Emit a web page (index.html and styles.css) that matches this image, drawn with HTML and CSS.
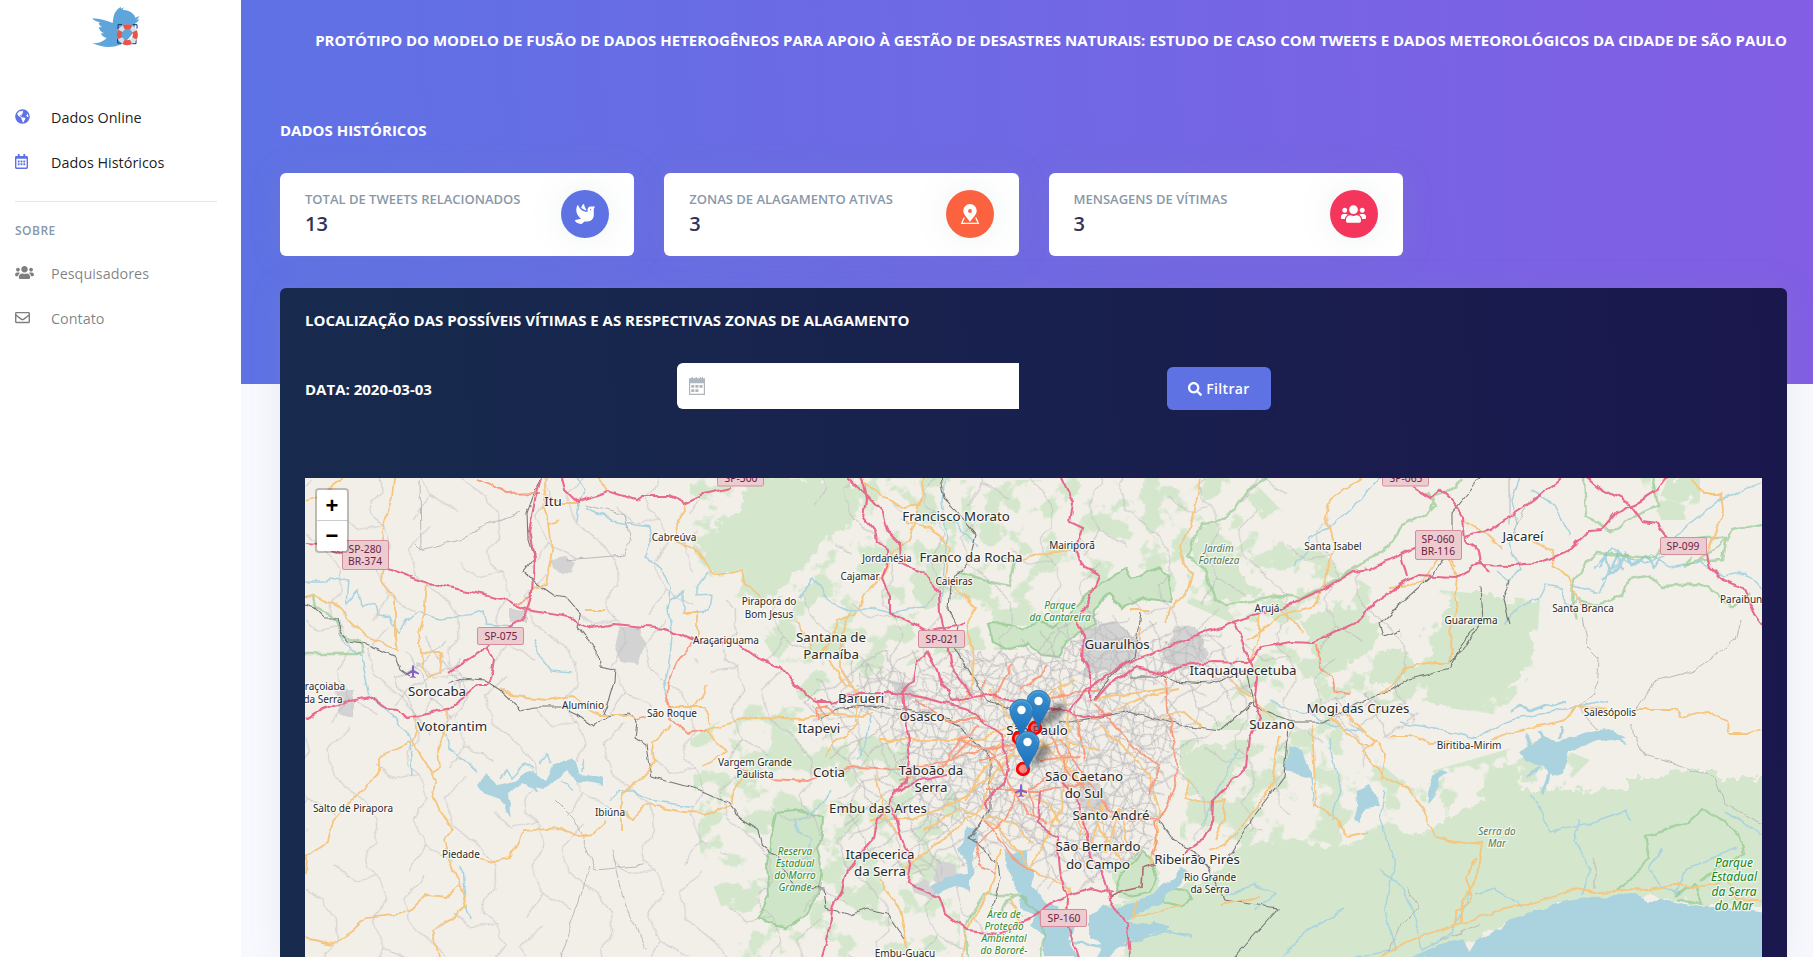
FILE: index.html
```html
<!DOCTYPE html>
<html lang="pt-br">
<head>
<meta charset="utf-8">
<title>Dados Históricos</title>
<link rel="stylesheet" href="styles.css">
</head>
<body>
<aside class="sidebar">
  <svg class="logo" viewBox="276 20 144 123" width="48" height="41">
    <path fill="#5ea5db" d="M278 54q32 2 60 14q2-38 24-48l2 5 8-4-4 7q30 2 38 24l12-5q-2 7-9 11l9-1q-4 8-12 12q-2 41-45 64q-37 16-84-4q28 1 43-16q-14-3-17-14h9q-15-7-15-19l9 1q-10-6-10-14l6-1q-20-3-25-12z"/>
    <path fill="none" stroke="#17345c" stroke-width="3" d="M354 86V73h12M398 73h13v12M353 115v13h13M396 130h12v-12"/>
    <circle cx="382" cy="103" r="24" fill="none" stroke="#d3dfec" stroke-width="14"/>
    <circle cx="382" cy="103" r="24" fill="none" stroke="#e4554c" stroke-width="15" stroke-dasharray="23 14.700" stroke-dashoffset="11.500"/>
  </svg>
  <nav class="nav nav-main">
    <a class="link"><svg class="ico blue" viewBox="0 0 496 512" width="15" height="15"><path d="M248 8C111.030 8 0 119.030 0 256s111.030 248 248 248 248-111.030 248-248S384.970 8 248 8zm82.290 357.600c-3.900 3.880-7.990 7.950-11.310 11.280-2.990 3-5.100 6.700-6.170 10.710-1.510 5.660-2.730 11.380-4.770 16.870l-17.390 46.850c-13.760 3-28 4.690-42.650 4.690v-27.380c1.690-12.620-7.640-36.260-22.630-51.250-6-6-9.370-14.140-9.370-22.630v-32.010c0-11.640-6.270-22.340-16.460-27.970-14.370-7.950-34.810-19.060-48.810-26.110-11.480-5.780-22.100-13.140-31.650-21.750l-.8-.72a114.792 114.792 0 0 1-18.060-20.740c-9.380-13.770-24.660-36.420-34.590-51.140 20.470-45.500 57.360-82.040 103.200-101.890l24.010 12.010C203.480 89.740 216 82.010 216 70.110v-11.300c7.990-1.290 16.120-2.110 24.390-2.420l28.300 28.300c6.250 6.250 6.250 16.380 0 22.630L264 112l-10.340 10.340c-3.120 3.120-3.120 8.190 0 11.310l4.690 4.690c3.120 3.120 3.120 8.190 0 11.310l-8 8a8.008 8.008 0 0 1-5.660 2.340h-8.990c-2.080 0-4.080.81-5.580 2.270l-9.920 9.650a8.008 8.008 0 0 0-1.580 9.310l15.590 31.190c2.660 5.320-1.210 11.580-7.150 11.580h-5.640c-1.930 0-3.790-.7-5.240-1.960l-9.280-8.060a16.017 16.017 0 0 0-15.550-3.100l-31.170 10.390a11.950 11.950 0 0 0-8.170 11.340c0 4.530 2.560 8.660 6.610 10.690l11.080 5.540c9.410 4.710 19.790 7.160 30.310 7.160s22.590 27.290 32 32h66.750c8.490 0 16.620 3.370 22.630 9.370l13.690 13.690a30.503 30.503 0 0 1 8.930 21.570 46.536 46.536 0 0 1-13.720 32.980zM417 274.250c-5.790-1.450-10.840-5-14.150-9.970l-17.980-26.970a23.970 23.970 0 0 1 0-26.620l19.590-29.380c2.320-3.470 5.500-6.290 9.240-8.150l12.980-6.490C440.200 193.590 448 223.870 448 256c0 8.670-.74 17.160-1.820 25.540L417 274.250z"/></svg><span>Dados Online</span></a>
    <a class="link"><svg class="ico blue" viewBox="0 0 448 512" width="13" height="15"><path d="M148 288h-40c-6.600 0-12-5.400-12-12v-40c0-6.600 5.400-12 12-12h40c6.600 0 12 5.400 12 12v40c0 6.600-5.400 12-12 12zm108-12v-40c0-6.600-5.400-12-12-12h-40c-6.600 0-12 5.400-12 12v40c0 6.600 5.400 12 12 12h40c6.600 0 12-5.400 12-12zm96 0v-40c0-6.600-5.400-12-12-12h-40c-6.600 0-12 5.400-12 12v40c0 6.600 5.400 12 12 12h40c6.600 0 12-5.400 12-12zm-96 96v-40c0-6.600-5.400-12-12-12h-40c-6.600 0-12 5.400-12 12v40c0 6.600 5.400 12 12 12h40c6.600 0 12-5.400 12-12zm-96 0v-40c0-6.600-5.400-12-12-12h-40c-6.600 0-12 5.400-12 12v40c0 6.600 5.400 12 12 12h40c6.600 0 12-5.400 12-12zm192 0v-40c0-6.600-5.400-12-12-12h-40c-6.600 0-12 5.400-12 12v40c0 6.600 5.400 12 12 12h40c6.600 0 12-5.400 12-12zm96-260v352c0 26.500-21.500 48-48 48H48c-26.500 0-48-21.500-48-48V112c0-26.500 21.500-48 48-48h48V12c0-6.600 5.400-12 12-12h40c6.600 0 12 5.400 12 12v52h128V12c0-6.600 5.400-12 12-12h40c6.600 0 12 5.400 12 12v52h48c26.500 0 48 21.500 48 48zm-48 346V160H48v298c0 3.300 2.700 6 6 6h340c3.300 0 6-2.700 6-6z"/></svg><span>Dados Históricos</span></a>
  </nav>
  <hr>
  <h6>SOBRE</h6>
  <nav class="nav nav-about">
    <a class="link muted"><svg class="ico" viewBox="0 0 640 512" width="19" height="15"><path id="users" d="M96 224c35.300 0 64-28.700 64-64s-28.700-64-64-64-64 28.700-64 64 28.700 64 64 64zm448 0c35.300 0 64-28.700 64-64s-28.700-64-64-64-64 28.700-64 64 28.700 64 64 64zm32 32h-64c-17.600 0-33.500 7.100-45.100 18.600 40.300 22.100 68.900 62 75.100 109.400h66c17.700 0 32-14.300 32-32v-32c0-35.300-28.700-64-64-64zm-256 0c61.900 0 112-50.100 112-112S381.900 32 320 32 208 82.100 208 144s50.100 112 112 112zm76.800 32h-8.300c-20.800 10-43.900 16-68.500 16s-47.600-6-68.500-16h-8.300C179.600 288 128 339.600 128 403.200V432c0 26.500 21.500 48 48 48h288c26.500 0 48-21.500 48-48v-28.800c0-63.600-51.600-115.200-115.200-115.200zm-223.700-13.400C161.500 263.100 145.600 256 128 256H64c-35.300 0-64 28.700-64 64v32c0 17.700 14.300 32 32 32h65.900c6.300-47.400 34.900-87.300 75.200-109.400z"/></svg><span>Pesquisadores</span></a>
    <a class="link muted"><svg class="ico" viewBox="0 0 512 512" width="15" height="15"><path d="M464 64H48C21.490 64 0 85.490 0 112v288c0 26.510 21.490 48 48 48h416c26.510 0 48-21.490 48-48V112c0-26.510-21.490-48-48-48zm0 48v40.805c-22.422 18.259-58.168 46.651-134.587 106.490-16.841 13.247-50.201 45.072-73.413 44.701-23.208.375-56.579-31.459-73.413-44.701C106.180 199.465 70.425 171.067 48 152.805V112h416zM48 400V214.398c22.914 18.251 55.409 43.862 104.938 82.646 21.857 17.205 60.134 55.186 103.062 54.955 42.717.231 80.509-37.199 103.053-54.947 49.528-38.783 82.032-64.401 104.947-82.653V400H48z"/></svg><span>Contato</span></a>
  </nav>
</aside>
<main>
  <header class="hero">
    <h1>Protótipo do modelo de fusão de dados heterogêneos para apoio à gestão de desastres naturais: estudo de caso com tweets e dados meteorológicos da cidade de São Paulo</h1>
    <h2>Dados históricos</h2>
    <div class="stats">
      <section class="stat">
        <div><p>Total de tweets relacionados</p><b>13</b></div>
        <span class="badge indigo"><svg viewBox="0 0 512 512" width="20" height="20"><path fill="#fff" d="M288 167.200v-28.100c-28.200-36.300-47.100-79.300-54.100-125.200-2.100-13.500-19-18.800-27.800-8.300-21.100 24.900-37.700 54.100-48.900 86.500 34.200 38.300 80 64.600 130.800 75.100zM400 64c-44.200 0-80 35.900-80 80.100v59.400C215.600 197.300 127 133 87 41.800c-5.500-12.500-23.200-13.200-29-.9C41.400 76 32 115.200 32 156.600c0 70.800 34.100 136.900 85.100 185.900 13.200 12.700 26.100 23.200 38.900 32.800l-143.900 36C1.400 414-3.400 426.400 2.600 435.700 20 462.600 63 508.200 155.800 512c8 .3 16-2.600 22.100-7.900l65.200-56.100H320c88.400 0 160-71.500 160-159.900V128l32-64H400zm0 96.100c-8.800 0-16-7.200-16-16s7.200-16 16-16 16 7.200 16 16-7.200 16-16 16z"/></svg></span>
      </section>
      <section class="stat">
        <div><p>Zonas de alagamento ativas</p><b>3</b></div>
        <span class="badge orange"><svg viewBox="0 0 20 20" width="20" height="20"><path fill="#fff" fill-rule="evenodd" d="M10 0a6.700 6.700 0 0 1 6.700 6.700c0 4-4.500 7.300-6.700 11.300C7.800 14 3.300 10.700 3.300 6.700A6.700 6.700 0 0 1 10 0zm0 5.100a1.900 1.900 0 1 0 0 3.800 1.900 1.900 0 0 0 0-3.800z"/><path fill="none" stroke="#fff" stroke-width="1.300" d="M4.300 13.600 1.700 19.300h16.600l-2.600-5.700"/></svg></span>
      </section>
      <section class="stat">
        <div><p>Mensagens de vítimas</p><b>3</b></div>
        <span class="badge red"><svg viewBox="0 0 640 512" width="25" height="20"><use href="#users" fill="#fff"/></svg></span>
      </section>
    </div>
  </header>
  <section class="panel">
    <h3>Localização das possíveis vítimas e as respectivas zonas de alagamento</h3>
    <form class="filter">
      <h4>Data: 2020-03-03</h4>
      <div class="field"><svg viewBox="0 0 16 18" width="16" height="18"><path fill="#adb5bd" fill-rule="evenodd" d="M0 1.300h2.500V0h1.300v1.300h2.800V0h1.300v1.300h2.700V0h1.300v1.300H13V0h1v1.300h2V18H0zm1.200 4.900v10.600h13.600V6.200z"/><path fill="#adb5bd" d="M2.300 8h3v2.800h-3zM6.400 8h3v2.800h-3zM10.500 8h3v2.800h-3zM2.300 12.200h3V15h-3zM6.400 12.200h3V15h-3z"/></svg></div>
      <div class="action"><button type="button"><svg viewBox="0 0 512 512" width="14" height="14"><path fill="#fff" d="M505 442.700L405.300 343c-4.500-4.500-10.600-7-17-7H372c27.600-35.300 44-79.700 44-128C416 93.100 322.900 0 208 0S0 93.100 0 208s93.100 208 208 208c48.300 0 92.700-16.400 128-44v16.300c0 6.400 2.500 12.500 7 17l99.700 99.700c9.400 9.400 24.600 9.400 33.900 0l28.300-28.300c9.400-9.400 9.400-24.600.1-34zM208 336c-70.700 0-128-57.200-128-128 0-70.700 57.200-128 128-128 70.700 0 128 57.200 128 128 0 70.700-57.200 128-128 128z"/></svg>Filtrar</button></div>
    </form>
    <div class="map">
      <svg class="canvas" viewBox="305 478 1457 479" width="1457" height="479">
        <defs>
          <filter id="wiggle" filterUnits="userSpaceOnUse" x="285" y="458" width="1500" height="520" color-interpolation-filters="sRGB">
            <feTurbulence type="fractalNoise" baseFrequency=".07" numOctaves="2" seed="4"/>
            <feDisplacementMap in="SourceGraphic" scale="7" xChannelSelector="R" yChannelSelector="G"/>
          </filter>
          <filter id="ragged" filterUnits="userSpaceOnUse" x="285" y="458" width="1500" height="520" color-interpolation-filters="sRGB">
            <feTurbulence type="fractalNoise" baseFrequency=".1" numOctaves="4" seed="7"/>
            <feDisplacementMap in="SourceGraphic" scale="16" xChannelSelector="R" yChannelSelector="G"/>
          </filter>
          <filter id="speckle" filterUnits="userSpaceOnUse" x="305" y="478" width="1457" height="479" color-interpolation-filters="sRGB">
            <feTurbulence type="fractalNoise" baseFrequency=".035" numOctaves="5" seed="11"/>
            <feColorMatrix values="0 0 0 0 .83  0 0 0 0 .906  0 0 0 0 .8  14 0 0 0 -7.100"/>
            <feComposite in2="SourceGraphic" operator="in"/>
          </filter>
          <filter id="soft" x="-50%" y="-50%" width="200%" height="200%"><feGaussianBlur stdDeviation="2.500"/></filter>
          <pattern id="streets" width="47" height="43" patternUnits="userSpaceOnUse" patternTransform="rotate(14)">
            <path class="street" d="M0 5L12 8 24 3 47 5M0 17L9 15 20 20 33 14 47 17M0 30L15 27 27 33 40 28 47 30M0 38h14l8 3 12-5 13 2M6 0L9 15 5 28 6 43M17 0L15 12 20 20 16 33 17 43M29 0l-2 12 6 8-4 13v10M40 0l2 16-3 12 1 15M9 15l6 12M20 20l7 13M24 3l9 11"/>
          </pattern>
          <pattern id="streets2" width="71" height="61" patternUnits="userSpaceOnUse" patternTransform="rotate(-33)">
            <path class="street" d="M0 9L20 14 38 6 71 9M0 31L14 27 39 37 52 28 71 31M0 52L25 49 44 55 71 52M11 0L14 27 8 44 11 61M30 0l3 15-4 17 5 18-4 11M57 0l-5 28 6 12-1 21"/>
          </pattern>
          <pattern id="lanes" width="127" height="109" patternUnits="userSpaceOnUse" patternTransform="rotate(22)">
            <path class="street" d="M0 22L22 30 44 16 60 34M88 0L76 28 92 50 127 61M0 61L20 72 30 94 23 109M23 0L30 12 44 16M60 34L55 60 76 80 108 84M76 80L70 109"/>
          </pattern>
          <linearGradient id="pinfill" x1="0" y1="0" x2="0" y2="1"><stop offset="0" stop-color="#3b93cf"/><stop offset="1" stop-color="#1a6cbb"/></linearGradient>
          <g id="pin">
            <path fill="url(#pinfill)" stroke="#2a73ad" stroke-width=".8" d="M0 0C-2-10-11.700-18-11.700-28.500A11.800 11.800 0 0 1 11.700-28.500C11.700-18 2-10 0 0z"/>
            <path fill="none" stroke="#5fa8dc" stroke-width=".8" d="M-10.500-28A10.600 10.600 0 0 1 10.500-28"/>
            <circle cy="-28" r="4.200" fill="#fff"/>
          </g>
          <path id="plane" fill="#8461c4" d="M0-6q1 0 1 2v3l5 3v1.500L1 2v3l1.700 1.200v.8L0 6.500-2.700 7v-.8L-1 5V2l-5 1.500V2l5-3v-3q0-2 1-2z"/>
        </defs>
        <rect x="305" y="478" width="1457" height="479" fill="#f2efe9"/>
        <g filter="url(#speckle)">
          <path d="M690 478H950L960 560 1010 620 960 650 860 680 800 700 740 600 690 560z"/>
          <path d="M750 700L880 720 960 800 960 957H740L700 850 690 740z"/>
          <path d="M1060 478H1250L1330 560 1390 600 1420 690 1330 730 1210 730 1270 640 1180 600 1110 600 1040 560z"/>
          <path d="M1180 740L1270 740 1330 720 1400 780 1540 740 1590 760 1540 810 1440 850H1180z"/>
          <path d="M1440 590L1540 600 1535 670 1500 715 1390 700zM1640 478H1700V520H1660z"/>
          <path d="M960 480H1060V650H970z"/>
        </g>
        <g class="wood" filter="url(#ragged)">
          <path d="M747 478H850L854 513 842 530 825 538 810 560 795 575 780 588 762 598 743 570 720 574 708 560 690 542 718 535 715 520 742 512z"/>
          <path d="M915 578l20 6 6 12-8 14-18-10z"/>
          <path d="M1204 523L1215 525 1235 550 1240 575 1262 590 1235 603 1220 600 1210 570 1188 557z"/>
          <path d="M1225 870L1240 842 1300 840 1340 848 1380 832 1425 834 1445 820 1485 800 1480 790 1490 770 1515 760 1520 790 1555 790 1627 789V778H1670L1672 770H1712L1716 778H1782V905L1700 905 1640 895 1560 905 1490 930 1420 977H1130L1110 905 1150 900z"/>
          <path d="M1140 850l18 20 2 20-20 16-18-8-12-26zM1300 620l40-15 40 20-10 30-50 12zM1380 652l20-5 18 20-20 20-30-6zM1180 753l35-10 30 12-24 48-34-8z"/>
          <path d="M1450 600l40-8 40 22 4 40-20 30-40 24-50-6 6-40z"/>
          <path d="M1665 478h30l-6 20-16 8-12-12z"/>
        </g>
        <g filter="url(#wiggle)">
          <g class="park">
            <path d="M776 812l19-2 28 8-1 18-5 11 5 22-3 20-12 27-20 13-30-9 12-24-2-33z"/>
            <path d="M988 624l25 1 8 5 19-8 14 5 10-7 30-33 8-4 24-14 6 9 29-10 6 7 5 27-28-4-22 10-14-14-16 15 4 16-16 7-13 8-8 17-16-2-14-12-20 7-16-8z"/>
            <path d="M1122 872l14-12 6-10 10 10 4 16-6 16-20 4-14-4zM1158 892l14-4 16 4 4 8-12 6-16-4z"/>
          </g>
          <g class="field-grey"><path d="M620 627h20l5 17-8 20-15-3-7-14zM510 610h16v12h-16zM550 560l16-3 10 5-4 10-20-2zM335 690h18v26h-14zM1084 630l30-8 26 18-10 26-46 10zM1175 625l20 2 14 26-20 18-28-10zM1080 780l20 4 12 25-14 10-20-20zM936 860l18 4 4 18-14 8-12-10zM910 885l14-4 14 10-6 8-16-6zM890 680l20 4 5 14-16 5z"/></g>
          <path fill="url(#lanes)" d="M305 478H700L690 640 730 740 700 820 740 957H305z" opacity=".8"/>
          <path fill="url(#lanes)" d="M800 478H1300L1420 640 1400 740 1270 830 1130 850 960 957H740L700 740 720 600 860 590z" opacity=".9"/>
          <path fill="url(#streets)" d="M862 662L935 680 960 650 1010 655 1060 650 1085 625 1130 640 1210 640 1190 670 1120 700 1180 720 1160 790 1150 850 1100 880 1040 850 980 820 930 830 900 760 890 720 850 710z"/>
          <path fill="url(#streets2)" d="M800 690L870 650 1000 650 1080 610 1220 630 1260 690 1180 760 1150 850 1060 900 1000 850 930 880 850 850 830 760z"/>
          <path fill="url(#streets2)" d="M395 660l30-25 30 10 15 40-20 35-25 20-30-30zM1320 700l60-10 40 25-20 25-60-10z" opacity=".9"/>
          <g class="water">
            <path d="M476 785l10-12 11 12 17-4 15-10 17 8 8-15 17-5 8 15 24 3v8l-26-4-10-11-12 10-12 10-22-6-13 10 3 25-11-20-17-6z"/>
            <path d="M967 826l8 4 1 14-4 18 3 12-6 8 0 10-12-6-18 8-8-8 16-10 20-2-1-12-8-14 8-8z"/>
            <path d="M1003 850l10 4 12-2 4 12 6 10-4 12 14 16 14 6-8 14 18-2 6 8-8 12 10 16h-32l-2-20-14-10 6-10-16-10 2-12-10-14-2-12z"/>
            <path d="M1090 914l16-8 16 2 14-8 16-4 10-10 12-6 6-12 8 2-6 14-14 10-6 8-14 6-12 8-10 4 12 6 16-4 16 4-4 6-16 2-8 8-14-2-10 8-8 8-14 2 6-14-12-8z"/>
            <path d="M1290 746l13 4 6 18 4 12-13-4-6-4-10-2zM1357 790l12-6 6 10 4 12-12 2-6 14-6-2z"/>
            <path d="M1519 752l14-8 12-8 10 6 20-6 22-5 16-1 14 8-30 2-28 12-6 20-12 5-8-12-16-3zM1432 775l8-5 8 2-8 6-4 16-8 10 2-14z"/>
            <path d="M1412 957l25-12 26-7 6 13 8-13 23-8 7-9 20-8 40-12 26-4 44-2 10 6h23l30 6h35l48 8v55z"/>
          </g>
          <g class="river">
            <path d="M305 582l20 0 7-5 17 4-2 23 12-13 2 16 15-5 2 12 11 2 9 18 9-16 14-5 19 6 26-3 17-5 3 13 27 2M533 640l7 17 10 13 22 2M340 620l2 20 20 17 3 17 5 23 24 20 16 23 2 37M447 733l3 17 13 10 14 12M462 867l3 33 5 20M577 478l8 12-8 13-2 17M585 507l32 15 33 5 2 13-7 17 17 11 8 19-2 23 4 27-4 33-5 17 4 13M670 600l13-7v20l27-2 2-16-15 1v-9l10-14M610 800l10-10h13l17 10 43 7M500 778l6-10 6 10 14-14 6 6M540 765l6-12 4 10M506 795l4 12M530 780l8 12M560 780l14 10M582 772l2-12"/>
            <path d="M800 598l13-20 17 25 20 8 20-4 20 6 20-4 16-1M945 478l-3 22 5 40-4 40-3 30M830 790l-12 20-20 10M870 715l-5 30-8 15M950 520l20 16 8 12M1240 748l-20 36-8 22-10 20M795 818l4 14 12 8-4 16-12 8"/>
            <path d="M1380 478l-15 18-20 18-12 12-24 12-4 16-10 12M1270 700l20 10 25 5 20 12 30 5M1310 770l4 36M1330 740l10 50-8 30"/>
            <path d="M1520 478l-8 22 5 24-8 20 10 25-10 12-12-10M1530 490l25 15 15 30M1670 540l50-40 42-18M1570 585l30 8 8-20 15-15 12 8 15-12 20 14 30-6 24 14 22-4 20 20"/>
            <path d="M1505 625l13-20 20-5 8-16 15 3 6 18 12-8M1400 722l40 8 35 8 36-18 30-6 40-8 15-4 12 2M1385 790l-5 30 15 40-10 50 10 40-40 7M1380 870l20 15 12 20 10 45 30-18 18-40M1530 795l14 20 6 16 40-8 34-12 8 10M1580 820l-6 20 16 30-8 26M1737 848l-50 20-12 25M1662 850l-12 18 10 18 20 8M1725 812l37 22M1345 910l-38 20-25 27M1225 895l30-10 20 10-20 16M1475 895l20-6 20 12 6 6M1595 568l15-18 20 8 14 6 20-8"/>
          </g>
          <g class="bay"><path d="M1600 568l6-12 4 16 8-18 4 14M1600 580l14-8 12-18 6 12 14-10 6 12 8-8M1530 746l-4-12M1545 740l-4-10M1560 738l2-10M1550 770l-8 24M1540 765l-14 12M1600 735l20 4 6 6M1510 712l10-6 10 4 14-6 10 2 12-4M1060 940l30 4 24 4 30-10 26-6 20 6M1170 884l12-8"/></g>
          <g class="border">
            <path d="M305 596h8l2 10 20 12 6 18 20 6 2 12-58 0M1268 478l-20 12-13 20-18 12-15 2-15 32 18 12 10 32 12 6 50-10 25 2 20-10 40-24 25-18 15-20 25-12 8-8-8-14M1430 510l4-15 20-6 8-11M1584 478l2 38 26 16 18-13 28-14-6-27M1577 620l-5-10 1-30 22-26 60 4 12-16 40-5 20 0-4 22-30 2M1577 600l20 5 26-10 5-16 20-3 15 10 36-2 20 12 14 12 16-14M1762 524l-30 6-16 20-30 16 4-10"/>
            <path d="M1618 890l32-32-4-22 10-4 32-10 14-12 26 14 12 12 4 18-18 8-24 18M1675 895l20-12 6 22-24-6"/>
            <path d="M957 572l26 8 26 6 6-24-20-8M968 957l-4-30 20-32 36 0 18 16 6 26-6 30M1002 915l4-14 14-7"/>
          </g>
          <g class="rail">
            <path d="M305 605l10 3 10 10h12l3 12 8 11 15 2 17 7 15 7 5 13 10 7M447 683l16-6 20 2 17 11 21 20 12-3h27l17 8 16 11 14-9 22-4 8 10-2 14 12 8 5 32 22 6 26 7 27 12 13 16 19 12 3 15 15 12 17 30 30 1 2 20 25 7 16-6 20 4 18 26"/>
            <path d="M540 478l-13 35 1 27 6 18-10 13 13 13 17 12 13 2 13 15-2 13 20 25 1 15 16 3-1 13-5 17-7 17M940 478l4 20 12 12 20 25-6 24-20 25-2 26 10 16-4 20 10 16 24 40 30 8 20 0M820 720l20-12 30-2 50 6 30 6 40 40 0 50-20 30 28 25 2 15-8 30"/>
            <path d="M1094 700l18-25 22-18 6-44M1130 676l30 0 12 6 38 2 36-14 8 36 40 16 30 0 40-22 25-8 21-14 40-10 10-20 14-20M1060 725l70-14 40 12 20 4 30 4 35-30M1288 726l-4 50-30 40-25 40M1160 820l14 20 30 20 20 40 54 8-44 49"/>
            <path d="M1480 478l-28 34 0 30-18 32-34 30-20 20 4 12 16-6M1480 586l2 34-18 30-16 12M1510 580l-6 20 6 24"/>
          </g>
          <g class="lane"><path d="M415 545l5 5 40-10 20-12 40-16M420 480l1 70M565 560l60-5 5-15-5-25-40-10M1583 617l5 30 10 10-2 36-15 12 3 10 14 15M1740 620l-5 20-40 30-40 12-22 32M1630 725l14 30 30 8 40 15 10 25 38 20M1405 885l14 22-20 20-12 26M555 800l20 20 20 50 50-5M612 850l15 60 20 40M560 957l30-90M1595 858v30M1440 940l40-16M1510 478v46M1530 500l-16 30"/></g>
          <g class="yellow">
            <path d="M305 501l15-6 23-17M394 478l-2 20-10 32 3 27-3 26 13 15v39l2 13M427 583l-3 34-5 16 4 37 6 7 11-4 2-20-22-1M305 595l12 2 23 11 10 12 17 17 30 12M547 478l-4 29 6 16 3 27-6 35-13 3M543 495l20 8h14M549 525l10-5M500 688l13 9 34 3 26-4 17 14 10 5h27l10 5M415 718l2 12-5 12-32 15v16l-20 19-27 28-5 22-22 15-1 18"/>
            <path d="M412 742l19 30 5 12-3 15 19 30-8 10 5 21 11 24 7 22-20 15-14 11 6 25M447 710l-2 23-8 17 2 17-8 5M305 938l27 6 21-14 14-13 43-5 17-17 20 2 12-12M477 858l10 5 23-5 13-27 37-3 17 8 16-2 14-13M622 830v-37l25-20 7-13-2-17 20-18M622 810l10 8 15-13 36 7 30 1 17-8 3-15 10-13M705 730l38-10 20-3 40 2 30-6 30 4 10-5M705 730l22 23-24 12M685 502l1 8-11 13 2 19 16 5 10 13 7 13 13 2 19-5 3 15 18 13M683 613h14v24M597 478l11 13M695 707l12-20M667 707h38l5 18M585 610h20M860 478l16 15 30 14 14-2 4-27M920 500l-10 40-18 12-6 20-20 20-12 24-18 6-5 20-10 14M830 660l15 25 15 8M900 520l30 8 20 20-4 30 30 28-10 20 8 30-2 30-10 16M795 620l15 22 2 8M850 613l-10 30 0 25 18 30-4 30-20 15-10 14M1200 478l-6 30-6 26-8 10 4 20 8 12-6 18-16 16-4 14M1362 478l-20 12-12 10-4 16 8 30-10 40-10 20-36 10-12 12-20 12M1020 560l20-6 30-4"/>
            <path d="M870 820l40 0 50-20 50-40 10-30-30-40M965 800l50-80 40-30 20-10M900 870l30-20 50-40 20-50 60-20 40 10M880 740l100 0 60-30M925 830l35-22 40 20 30 40 40 20-4 24-26 6M1000 850l-10 40-24 40-4 27M1090 720l60-25 30-6M1090 700l80-12M1060 680l10 50-10 80-30 60M1100 725l20 20 30 30 10 40-8 50M1040 740l40 40 20 50 20 30M1080 840l0-30 10 40 12-46 4 50 14-46 8 40M1130 610h20M1140 640l0-14M1160 720l10-6 14-2 18 16M1190 780l-5 18 20 6 20-4 0 20-10 20M1280 735l-10 55-40 50-20 10M1312 725l4 80 20 14 12 18 20-4M1260 610l-2 34-12 20M1280 610l24 22M1230 680l24 20 20 20M1330 718l30 25 10 4M1345 712l30 30-12 10 20 24 26 12 12 18 10 20 4 12 30 6 16-2-6 40-14 20v20M1180 905l-48 14 4-20M1220 905l40-8M880 880l20 30 10 47M875 775l10 40 14 20M985 815l30 10 20 20M1010 790l40 14 10 20"/>
            <path d="M1380 695l15-12 10-16 30-5 14 0 4-12-4-20 8-20-2-14 2-20-10-20M1390 587l20-2 12-3 14-20 10-30M1465 521l16 10 20 18M1533 540l20 10 1 14 14 13 8 20 4 8M1440 538l16 30M1390 735l20 0 20 8 20-2M1490 740l40-12 36-8 10-14 18 2 12 2M1636 709l40 0 6 8 24-6 20 10 4 12 20 0 12-4M1692 478l10 16 20 0 2 14-8 24-8 20-8 6M1380 957l34-18 44-15 36-12 40-10 30-8 12-6 20 4 46-2 30-5 34 2 22-8 10 20 30 2 42-4M1456 924v-12l16-14-5-20 8-20M1020 920l-10-20M1375 740l10 15-4 24"/>
          </g>
          <g class="orange">
            <path d="M477 478l16 6 14 10 33-1M533 595l-18 10M692 643l-15 20-9 20-1 20 3 13 18 17 17-3M637 720l10-3M740 767l10 7 20 5 38 2 22-9 30-5 30 2 40-4 20-6 40-10 36-8M818 720l-2-12 12-2 8 8M815 698l10 20M980 700l4-22M995 700l8-20 10-16M1020 690l20-14 8-10M915 700l30 20 40 0M900 780l40-10 20-30 20-14M960 740l32 14 36 60 20 10M1040 700l60-10M1075 710l10 50M1165 680l2 30 8 34 2 36-12 32-10 10 2 20-4 10 10 12M1095 705l40 44 25 16-10 30M1018 790l-12 30-30 24 4 20 14 10M985 820l30 40 20 12M1040 760l40-4M1060 770l-30 18 4 30M1060 740l20 30 30 40 20 10 30-2M1316 645l4 26 12 6 4 16 14 2M980 760l30-10 30-20M985 790l60 0 40-6M950 760l20-20M1050 730l16 40 20 20"/>
          </g>
          <g class="pink">
            <path d="M305 544l15 1 38 15 30 8 20 8 20 7 40 8 33 8 27 11 40 7 23 11 24-4 50 5 28 12 38 2 14 6 13 9 23 9 14 17 20 18 17 0 30-10 33 0 26 5 27 7 20 5 10 10 23 17 7 20-3 26-20 20 2 7"/>
            <path d="M541 478l-6 22-6 32 5 25-2 36-5 17-7 10-20 13-12 14-40 26M488 647l6 11-2 14-5 13h-9l-15 13-16 12-40 8-8-8-12-1-17-12-20 4-17 4-13 5-15 9M562 478l3 12 12 12 31-11 22 7 7 2 6-4h27l14 7 20-9 27-6"/>
            <path d="M848 478l20 19 14 15 5 18 12 12 1 20 26 13 13 18 1 20 6 24 5 30 22 30 16-2 27 7 50 8 17 8 28-4M863 478l4 22-3 17 11 13 2 12 10 8v15l-5 13 8 19v15l23 12 12 7 38-7M927 652l-10 11-3 17-12 12 2 21 3 24 3 20-3 23-14 13-1 10-15 17-5 20-12 13-13 17-5 20-10 20-3 23-7 24M927 652l10 18 3 13 10 9 2 8 22-3M894 793l19-10 33-8M892 803l8 30 10 30-3 20 32 13 6 17 22 17 33 3 27-13 26-17 21-10 15-5 24 5"/>
            <path d="M1061 478l12 25-3 19 13 6-7 22 6 15 17 10-10 25-12 23 7 14-1 25 8 12v26M1067 712l20-22 36-25 37-15 73-28 27-9 23-5 37-17 33-19 17-2 30-15 34-16M1095 700l15-17 27-16 26 8 19-10 31-3 34 1 16-16 27-5 23 1 44-21 16-18 27-19 18-10 38 2 23-13 33 1 27-2 27-11 23-22 13-1 14-17 23-10 17-11 11-15M1234 622l7 15 6 20 10 20-2 20 5 23-10 17-3 30-34 33-1 24-9 16-15 7-5 7M1402 555l6 22M1062 783l18 20 7 33 3 20 13 17 7 27 17 25 3 32M1040 790l-2 33 19 14 3 33 8 27-1 26 11 34M1413 487l17 11 10-9 12 12 11 15 2 25 15 10 2 13 8 8M1465 537l25-7 33-22 34-25 5-5M1588 478l9 8 33 18 13 18 14 2 11 13M1707 555l3 12 14 13 18 8 12 26 8 11"/>
          </g>
          <path fill="none" stroke="#b16e6e" stroke-width="1.700" d="M1110 898l10-6 22-5 1-18 12-4"/>
        </g>
        <g class="shield">
          <rect x="717.500" y="468" width="46" height="18" rx="1.500"/><rect x="1382.500" y="468" width="46" height="18" rx="1.500"/>
          <rect x="342.500" y="540.500" width="46" height="29" rx="1.500"/><rect x="477.500" y="627.500" width="46" height="17" rx="1.500"/>
          <rect x="918.500" y="630.500" width="46" height="17" rx="1.500"/><rect x="1040.500" y="909.500" width="46" height="17" rx="1.500"/>
          <rect x="1415.500" y="530.500" width="46" height="29" rx="1.500"/><rect x="1660.500" y="537.500" width="46" height="17" rx="1.500"/>
          <text x="741" y="482">SP-300</text><text x="1406" y="482">SP-065</text>
          <text x="365" y="553">SP-280</text><text x="365" y="565">BR-374</text><text x="501" y="640">SP-075</text><text x="942" y="643">SP-021</text>
          <text x="1064" y="922">SP-160</text><text x="1438" y="543">SP-060</text><text x="1438" y="555">BR-116</text><text x="1683" y="550">SP-099</text>
        </g>
        <g class="city">
          <text x="553" y="506">Itu</text><text x="437" y="695.500">Sorocaba</text><text x="452" y="731">Votorantim</text>
          <text x="956" y="520.500">Francisco Morato</text><text x="971" y="561.500">Franco da Rocha</text>
          <text x="831" y="642">Santana de</text><text x="831" y="659">Parnaíba</text><text x="861" y="703">Barueri</text><text x="922" y="720.500">Osasco</text>
          <text x="819" y="733">Itapevi</text><text x="829" y="777">Cotia</text><text x="931" y="775">Taboão da</text><text x="931" y="791.500">Serra</text>
          <text x="878" y="813">Embu das Artes</text><text x="880" y="859">Itapecerica</text><text x="880" y="875.500">da Serra</text>
          <text x="1037" y="734.500">São Paulo</text><text x="1117" y="649">Guarulhos</text><text x="1243" y="674.500">Itaquaquecetuba</text>
          <text x="1358" y="713">Mogi das Cruzes</text><text x="1272" y="728.500">Suzano</text><text x="1084" y="781">São Caetano</text><text x="1084" y="797.500">do Sul</text>
          <text x="1111" y="819.500">Santo André</text><text x="1098" y="851">São Bernardo</text><text x="1098" y="869">do Campo</text><text x="1197" y="863.500">Ribeirão Pires</text><text x="1523" y="540.500">Jacareí</text>
        </g>
        <g class="town">
          <text x="674" y="541">Cabreúva</text><text x="769" y="605">Pirapora do</text><text x="769" y="618">Bom Jesus</text><text x="726" y="644">Araçariguama</text>
          <text x="325" y="690">raçoiaba</text><text x="323" y="703">da Serra</text><text x="583" y="709">Alumínio</text><text x="672" y="717">São Roque</text>
          <text x="755" y="766">Vargem Grande</text><text x="755" y="778">Paulista</text><text x="353" y="812">Salto de Pirapora</text><text x="610" y="816">Ibiúna</text><text x="461" y="858">Piedade</text>
          <text x="887" y="562">Jordanésia</text><text x="860" y="580">Cajamar</text><text x="954" y="585">Caieiras</text><text x="1072" y="549">Mairiporã</text><text x="905" y="957">Embu-Guaçu</text>
          <text x="1333" y="550">Santa Isabel</text><text x="1267" y="612">Arujá</text><text x="1210" y="881">Rio Grande</text><text x="1210" y="893">da Serra</text>
          <text x="1471" y="624">Guararema</text><text x="1583" y="612">Santa Branca</text><text x="1720" y="603" class="start">Paraibuna</text><text x="1610" y="716">Salesópolis</text><text x="1469" y="749">Biritiba-Mirim</text>
        </g>
        <g class="reserve">
          <text x="795" y="855">Reserva</text><text x="795" y="867">Estadual</text><text x="795" y="879">do Morro</text><text x="795" y="891">Grande</text>
          <text x="1060" y="609">Parque</text><text x="1060" y="621">da Cantareira</text>
          <text x="1004" y="918">Área de</text><text x="1004" y="930">Proteção</text><text x="1004" y="942">Ambiental</text><text x="1004" y="954">do Bororé-</text>
          <text class="grey" x="1219" y="552">Jardim</text><text class="grey" x="1219" y="564">Fortaleza</text><text class="grey" x="1497" y="835">Serra do</text><text class="grey" x="1497" y="847">Mar</text>
          <text class="big" x="1734" y="867">Parque</text><text class="big" x="1734" y="881">Estadual</text><text class="big" x="1734" y="896">da Serra</text><text class="big" x="1734" y="910">do Mar</text>
        </g>
        <use href="#plane" x="413" y="671"/><use href="#plane" x="1021" y="790"/>
        <g class="shadows" filter="url(#soft)"><path d="M1040 728l12-22 9-4 5 7-10 12zM1023 737l12-20 10-4 5 7-12 10zM1029 768l8-18 8-8 6 8-8 12z"/></g>
        <g class="zone"><circle cx="1019" cy="738" r="5.800"/><circle cx="1035" cy="728" r="5.800"/><circle cx="1023" cy="769" r="5.800"/></g>
        <use href="#pin" x="1038.500" y="729"/><use href="#pin" x="1021.500" y="738"/><use href="#pin" x="1027.500" y="770"/>
      </svg>
      <div class="zoom"><span>+</span><span>−</span></div>
    </div>
  </section>
</main>
</body>
</html>
```
FILE: styles.css
```css
* { box-sizing: border-box; }
html, body { height: 100%; overflow: hidden; }
body { margin: 0; display: flex; background: #f8f9fe; font-family: "Open Sans", sans-serif; color: #525f7f; }
h1, h2, h3, h4, h6, p, hr { margin: 0; }

.sidebar { width: 241px; flex: none; height: 957px; background: #fff; padding: 7px 24px 0 15px; }
.logo { display: block; margin-left: 77px; }
.nav { display: flex; flex-direction: column; }
.nav-main { margin-top: 47px; }
.link { display: flex; align-items: center; height: 45px; font-size: 14.4px; color: rgba(0, 0, 0, .9); }
.link .ico { margin-top: -2px; flex: none; fill: currentColor; }
.link .ico.blue { fill: #5e72e4; }
.link span { position: absolute; margin-left: 36px; }
.muted { color: rgba(0, 0, 0, .5); }
.sidebar hr { border: 0; border-top: 1px solid rgba(0, 0, 0, .1); margin-top: 16px; width: 202px; }
.sidebar h6 { font-size: 12px; font-weight: 600; letter-spacing: .48px; line-height: 18px; color: #8898aa; margin-top: 20px; }
.nav-about { margin-top: 11px; }

main { flex: 1; min-width: 0; height: 957px; overflow: hidden; }
.hero { height: 384px; padding: 0 26px 0 39px; background: linear-gradient(87deg, #5e72e4, #825ee4); }
h1, h2, h3, h4 { color: #fff; font-size: 15px; font-weight: 700; line-height: 22px; text-transform: uppercase; white-space: nowrap; }
h1 { padding-top: 29px; text-align: right; }
h2 { margin-top: 68px; }
.stats { display: grid; grid-template-columns: repeat(3, 354.25px); column-gap: 30px; margin-top: 32px; }
.stat { height: 83px; padding: 17px 25px 0 25px; display: flex; justify-content: space-between; background: #fff; border-radius: 6px; box-shadow: 0 0 32px rgba(136, 152, 170, .15); }
.stat p { font-size: 13px; line-height: 20px; margin-top: -1px; font-weight: 600; color: #8898aa; text-transform: uppercase; white-space: nowrap; }
.stat b { display: block; font-size: 20px; line-height: 29px; font-weight: 600; color: #32325d; }
.badge { width: 48px; height: 48px; border-radius: 50%; display: flex; align-items: center; justify-content: center; box-shadow: 0 0 32px rgba(136, 152, 170, .15); }
.indigo { background: #5e72e4; }
.orange.badge { background: #fb6340; }
.red { background: #f5365c; }

.panel { margin: -96px 26px 0 39px; height: 669px; padding: 21px 25px 0; background: linear-gradient(87deg, #172b4d, #1a174d); border-radius: 6px 6px 0 0; position: relative; box-shadow: 0 0 32px rgba(136, 152, 170, .15); }
.filter { display: grid; grid-template-columns: 372px 342px 1fr; margin-top: 32px; height: 115px; align-items: start; }
.filter h4 { margin-top: 15px; }
.field { height: 46px; background: #fff; border-radius: 6px 0 0 6px; padding: 14px 12px; }
.field svg { display: block; }
.action { padding: 4px 0 0 148px; }
button { display: flex; align-items: center; justify-content: center; gap: 4px; width: 104px; height: 43px; border: 0; border-radius: 6px; background: #5e72e4; color: #fff; font: 600 14px "Open Sans", sans-serif; letter-spacing: .35px; box-shadow: 0 4px 6px rgba(50, 50, 93, .11); }
.map { position: relative; height: 479px; overflow: hidden; }
.canvas { display: block; }
.zoom { position: absolute; left: 10px; top: 10px; width: 34px; height: 65px; border: 2px solid rgba(0, 0, 0, .22); border-radius: 4px; background: #fff; background-clip: padding-box; display: flex; flex-direction: column; }
.zoom span { height: 30px; font: 700 22px/32px "Liberation Sans", sans-serif; color: #000; text-align: center; }
.zoom span + span { border-top: 1px solid #ccc; height: 31px; line-height: 29px; }

.street { fill: none; stroke: #b9b8ba; stroke-width: .85; }
.lane { fill: none; stroke: #b4b3b6; stroke-width: .9; }
.wood { fill: #d4e7cc; }
.park { fill: #cfe5c8; stroke: #a0cf9b; stroke-width: 2; }
.field-grey { fill: #d4d3d3; }
.water { fill: #aad3df; }
.river { fill: none; stroke: #aad3df; stroke-width: 1.5; }
.bay { fill: none; stroke: #aad3df; stroke-width: 2.6; }
.border { fill: none; stroke: #8fc78d; stroke-width: 2.4; opacity: .65; }
.rail { fill: none; stroke: #777; stroke-width: 1.1; }
.yellow { fill: none; stroke: #f6c57e; stroke-width: 1.8; }
.canvas .orange { fill: none; stroke: #f79c7e; stroke-width: 1.8; }
.pink { fill: none; stroke: #e8698b; stroke-width: 2.1; }
.shield rect { fill: #eccbd1; stroke: #d58d9c; }
.shield text { font: 10.3px "Noto Sans", sans-serif; fill: #6d2441; text-anchor: middle; }
.city text, .town text, .reserve text { text-anchor: middle; paint-order: stroke; stroke: rgba(255, 255, 255, .7); stroke-width: 2.5px; stroke-linejoin: round; fill: #2b2b2b; font-family: "Noto Sans", sans-serif; }
.city text { font-size: 13.3px; }
.town text { font-size: 10px; }
.town text.start { text-anchor: start; }
.reserve text { font-size: 10px; font-style: italic; fill: #2e8b34; }
.reserve text.grey { fill: #5b7855; }
.reserve text.big { font-size: 12px; fill: #16861f; }
.shadows { fill: rgba(0, 0, 0, .4); }
.zone { fill: rgba(255, 60, 60, .55); stroke: #f00; stroke-width: 2.8; }
```
